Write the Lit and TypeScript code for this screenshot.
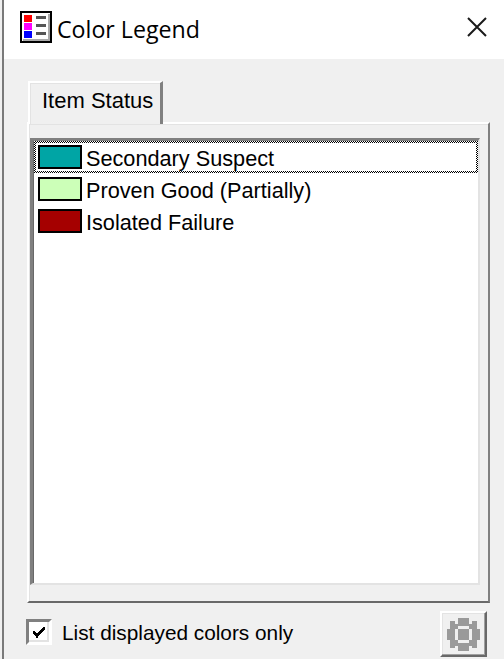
import {customElement} from "lit/decorators.js";
import {css, html, LitElement, svg} from "lit";

const items = [
    {label: "Secondary Suspect", color: "#00a5a5", selected: true},
    {label: "Proven Good (Partially)", color: "#ccffb8", selected: false},
    {label: "Isolated Failure", color: "#a50000", selected: false},
];

// pixel rows of the disabled gear, drawn as blocks like the original bitmap
const gearRows = [
    "....####....",
    ".##.####.##.",
    ".##########.",
    ".###....###.",
    "###.####.###",
    "###.####.###",
    "###.####.###",
    "###.####.###",
    ".###....###.",
    ".##########.",
    ".##.####.##.",
    "....####....",
];

@customElement("app-root")
export class AppRoot extends LitElement {
    protected override render() {
        return html`
            <div class="window">
                <header class="titlebar">
                    <svg class="app-icon" width="32" height="32" viewBox="0 0 32 32">
                        <rect x="1" y="1" width="30" height="30" fill="#fff" stroke="#000" stroke-width="2"/>
                        <path d="M29 3v26H3" fill="none" stroke="#aaa" stroke-width="2"/>
                        <rect x="4" y="4" width="8" height="7" fill="#f00"/>
                        <rect x="4" y="12" width="8" height="7" fill="#f0f"/>
                        <rect x="4" y="20" width="8" height="7" fill="#00f"/>
                        <rect x="16" y="5" width="10" height="3" fill="#555"/>
                        <rect x="16" y="13" width="10" height="3" fill="#555"/>
                        <rect x="16" y="21" width="10" height="3" fill="#555"/>
                    </svg>
                    <span class="title">Color Legend</span>
                    <svg class="close" width="20" height="20" viewBox="0 0 20 20">
                        <path d="M1 1L19 19M19 1L1 19" stroke="#1a1a1a" stroke-width="2" fill="none"/>
                    </svg>
                </header>
                <main class="body">
                    <div class="tabs">
                        <div class="tab">Item Status</div>
                    </div>
                    <section class="panel">
                        <div class="list">
                            ${items.map(
                                (item) => html`
                                    <div class="row ${item.selected ? "selected" : ""}">
                                        <div class="row-inner">
                                            <span class="swatch" style="background:${item.color}"></span>
                                            <span class="label">${item.label}</span>
                                        </div>
                                    </div>
                                `
                            )}
                        </div>
                    </section>
                    <footer class="footer">
                        <div class="checkbox">
                            <svg width="12" height="11" viewBox="0 0 12 11" shape-rendering="crispEdges">
                                <path d="M0 4h2v1h1v1h2V5h1V4h1V3h1V2h1V1h1V0h2v3h-1v1h-1v1H9v1H8v1H7v1H6v1H5v2H3V9H2V8H1V7H0z" fill="#000"/>
                            </svg>
                        </div>
                        <span class="check-label">List displayed colors only</span>
                        <button class="gear-btn">
                            <svg width="33" height="33" viewBox="0 0 12 12" shape-rendering="crispEdges">
                                ${gearRows.map((row, y) =>
                                    [...row].map((c, x) =>
                                        c === "#"
                                            ? svg`<rect x=${x} y=${y} width="1" height="1" fill="#9a9a9a"></rect>`
                                            : ""
                                    )
                                )}
                            </svg>
                        </button>
                    </footer>
                </main>
            </div>
        `;
    }

    static override styles = css`
        :host {
            display: block;
            width: 504px;
            height: 659px;
            overflow: hidden;
            background: #f0f0f0;
        }
        .window {
            box-sizing: border-box;
            display: flex;
            flex-direction: column;
            height: 659px;
            margin-left: 2px;
            border-left: 2px solid #7a7a7a;
        }
        .titlebar {
            display: flex;
            align-items: center;
            flex: none;
            height: 59px;
            box-sizing: border-box;
            padding: 0 17px 5px 16px;
            background: #fff;
        }
        .app-icon {
            flex: none;
        }
        .title {
            margin-left: 5px;
            padding-top: 4px;
            font: 23.2px "Open Sans", sans-serif;
            color: #000;
            flex: 1;
        }
        .close {
            flex: none;
        }
        .body {
            flex: 1;
            display: flex;
            flex-direction: column;
            padding: 22px 14px 2px 23px;
            min-height: 0;
        }
        .tabs {
            display: flex;
            position: relative;
            z-index: 1;
            margin-bottom: -2px;
        }
        .tab {
            box-sizing: border-box;
            width: 135px;
            height: 43px;
            margin-left: 1px;
            padding: 5px 0 0 12px;
            background: #f0f0f0;
            border-top: 2px solid #fff;
            border-left: 2px solid #fff;
            border-right: 3px solid #808080;
            box-shadow: inset 1px 1px 0 #e3e3e3;
            font: 22px "Liberation Sans", sans-serif;
            color: #000;
        }
        .panel {
            box-sizing: border-box;
            height: 481px;
            flex: none;
            padding: 14px 8px 16px 1px;
            background: #f0f0f0;
            border-top: 2px solid #fff;
            border-left: 2px solid #fff;
            border-right: 2px solid #808080;
            border-bottom: 2px solid #696969;
            box-shadow: inset 1px 1px 0 #e3e3e3;
        }
        .list {
            box-sizing: border-box;
            height: 100%;
            background: #fff;
            border-top: 3px solid #808080;
            border-left: 3px solid #808080;
            border-right: 2px solid #e3e3e3;
            border-bottom: 2px solid #e3e3e3;
            box-shadow: inset 1px 1px 0 #696969;
        }
        .row {
            box-sizing: border-box;
            height: 32px;
            margin-left: 1px;
            padding: 2px;
        }
        .row.selected {
            background: repeating-conic-gradient(#000 0 25%, #fff 0 50%) 0 0 / 2px 2px;
        }
        .row-inner {
            display: flex;
            align-items: center;
            height: 100%;
            padding-left: 2px;
            background: #fff;
        }
        .swatch {
            box-sizing: border-box;
            width: 44px;
            height: 24px;
            flex: none;
            border: 2px solid #000;
        }
        .label {
            margin: 4px 0 0 4px;
            font: 21.7px "Liberation Sans", sans-serif;
            color: #000;
            white-space: nowrap;
        }
        .footer {
            flex: 1;
            display: flex;
            align-items: flex-start;
            padding-top: 8px;
        }
        .checkbox {
            box-sizing: border-box;
            width: 26px;
            height: 26px;
            flex: none;
            margin: 8px 0 0 -1px;
            display: flex;
            align-items: center;
            justify-content: center;
            background: #fff;
            border-style: solid;
            border-width: 3px;
            border-color: #808080 #fff #fff #808080;
            box-shadow: inset -2px -2px 0 #e3e3e3;
        }
        .check-label {
            margin: 10px 0 0 10px;
            font: 20.8px "Liberation Sans", sans-serif;
            color: #000;
            flex: 1;
        }
        .gear-btn {
            box-sizing: border-box;
            width: 47px;
            height: 46px;
            margin-right: 3px;
            padding: 0;
            display: flex;
            align-items: center;
            justify-content: center;
            background: #f0f0f0;
            border-style: solid;
            border-width: 2px;
            border-color: #fff #696969 #696969 #fff;
            box-shadow: inset -1px -1px 0 #a0a0a0, inset 1px 1px 0 #e3e3e3;
        }
    `;
}
